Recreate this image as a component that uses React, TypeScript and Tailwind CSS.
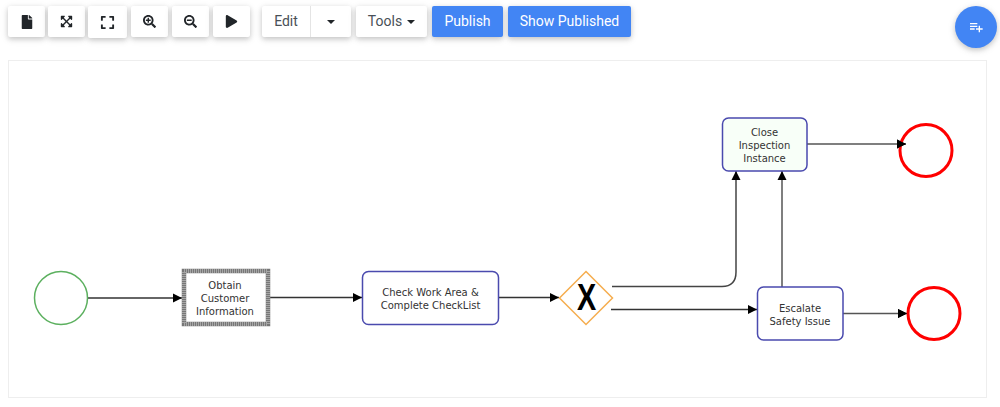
import { FaExpand, FaExpandArrowsAlt, FaFile, FaPlay, FaSearchMinus, FaSearchPlus } from "react-icons/fa";
import { MdPlaylistAdd } from "react-icons/md";

const shadow = "shadow-[0_2px_5px_0_rgba(0,0,0,0.16),0_2px_8px_0_rgba(0,0,0,0.1)]";

function IconButton({ children, className }: { children: React.ReactNode; className: string }) {
  return (
    <button className={`flex h-[31px] items-center justify-center rounded-[2px] bg-white text-[#212529] ${shadow} ${className}`}>
      {children}
    </button>
  );
}

function Caret() {
  return <span className="inline-block border-x-[4px] border-t-[4px] border-x-transparent border-t-[#212529]" />;
}

function TaskText({ lines, className }: { lines: string[]; className: string }) {
  return (
    <div className={`absolute flex flex-col items-center justify-center text-center font-['DejaVu_Sans',sans-serif] text-[10px] leading-[13px] text-[#333] ${className}`}>
      {lines.map((line) => (
        <span key={line} className="whitespace-nowrap">
          {line}
        </span>
      ))}
    </div>
  );
}

function Diagram() {
  return (
    <svg className="absolute top-0 left-0" width="978" height="336" viewBox="9 61 978 336">
      <defs>
        <marker id="arrow" markerUnits="userSpaceOnUse" markerWidth="10" markerHeight="10" refX="9" refY="5" orient="auto">
          <path d="M0 0.5 L9 5 L0 9.5 Z" fill="#000" />
        </marker>
      </defs>
      <g fill="none" stroke="#333" strokeWidth="1.5">
        <path d="M87 298 H182" markerEnd="url(#arrow)" />
        <path d="M270 297.5 H362" markerEnd="url(#arrow)" />
        <path d="M499 297.5 H559" markerEnd="url(#arrow)" />
        <path d="M612 286.5 H722 Q736 286.5 736 272 V171" stroke="#444" markerEnd="url(#arrow)" />
        <path d="M611 309.5 H757" markerEnd="url(#arrow)" />
        <path d="M782 287 V171" stroke="#555" markerEnd="url(#arrow)" />
        <path d="M807 144 H906" stroke="#555" markerEnd="url(#arrow)" />
        <path d="M843 313.5 H907" stroke="#555" markerEnd="url(#arrow)" />
      </g>
      <circle cx="61" cy="298" r="26.5" fill="#fff" stroke="#5cb05f" strokeWidth="1.5" />
      <rect x="184" y="271" width="84" height="53" fill="#fff" stroke="#777" strokeWidth="4.5" />
      <rect x="184" y="271" width="84" height="53" fill="none" stroke="#fff" strokeWidth="4.5" strokeDasharray="1 1" opacity="0.35" />
      <rect x="362.5" y="271.5" width="136" height="53" rx="6" fill="#fff" stroke="#4a4aae" strokeWidth="1.5" />
      <path d="M586 271.5 L612.5 298 L586 324.5 L559.5 298 Z" fill="#fff" stroke="#f6ad4e" strokeWidth="1.5" />
      <rect x="722.5" y="118" width="84.5" height="53" rx="6" fill="#f8fff8" stroke="#4a4aae" strokeWidth="1.5" />
      <rect x="757.5" y="287" width="85.5" height="53" rx="6" fill="#fff" stroke="#4a4aae" strokeWidth="1.5" />
      <circle cx="926" cy="150.5" r="26" fill="#fff" fillOpacity="0" stroke="#f00" strokeWidth="3" />
      <circle cx="934" cy="313.5" r="26" fill="#fff" fillOpacity="0" stroke="#f00" strokeWidth="3" />
      <path d="M897 139.5 L906 144 L897 148.5 Z" fill="#000" />
      <path d="M898 309 L907 313.5 L898 318 Z" fill="#000" />
    </svg>
  );
}

export default function App() {
  return (
    <div className="relative h-[407px] w-[1000px] overflow-hidden bg-white font-['Roboto',sans-serif]">
      <div className="flex items-start pt-[6px] pl-[8px] text-[14px] text-[#495057]">
        <IconButton className="w-[37px] text-[14px]"><FaFile /></IconButton>
        <IconButton className="ml-[3px] w-[37px] text-[13px]"><FaExpandArrowsAlt /></IconButton>
        <IconButton className="ml-[3px] h-[32px] w-[39px] text-[15px]"><FaExpand /></IconButton>
        <IconButton className="ml-[4px] w-[37px] text-[13px]"><FaSearchPlus /></IconButton>
        <IconButton className="ml-[4px] w-[37px] text-[13px]"><FaSearchMinus /></IconButton>
        <IconButton className="ml-[4px] w-[37px] text-[13px]"><FaPlay /></IconButton>
        <div className={`ml-[12px] flex h-[31px] w-[89px] rounded-[2px] bg-white ${shadow}`}>
          <button className="w-[49px] border-r border-[#e4e4e4] text-center">Edit</button>
          <button className="flex flex-1 items-center justify-center"><Caret /></button>
        </div>
        <button className={`ml-[5px] flex h-[31px] w-[71px] items-center justify-center gap-[5px] rounded-[2px] bg-white ${shadow}`}>
          Tools <Caret />
        </button>
        <button className={`ml-[5px] h-[31px] w-[71px] rounded-[2px] bg-[#4285f4] text-white ${shadow}`}>Publish</button>
        <button className={`ml-[5px] h-[31px] w-[123px] rounded-[2px] bg-[#4285f4] text-white ${shadow}`}>Show Published</button>
      </div>
      <div className={`absolute top-[6px] left-[955px] flex h-[42px] w-[42px] items-center justify-center rounded-full bg-[#4285f4] text-[16px] text-white ${shadow}`}>
        <MdPlaylistAdd />
      </div>
      <div className="relative mt-[22px] ml-[8px] h-[338px] w-[979px] border border-[#eeeeee]">
        <Diagram />
        <TaskText lines={["Obtain", "Customer", "Information"]} className="top-[209px] left-[172px] h-[57px] w-[88px]" />
        <TaskText lines={["Check Work Area &", "Complete CheckList"]} className="top-[211px] left-[353px] h-[54px] w-[137px]" />
        <TaskText lines={["Close", "Inspection", "Instance"]} className="top-[58px] left-[713px] h-[53px] w-[85px]" />
        <TaskText lines={["Escalate", "Safety Issue"]} className="top-[227px] left-[748px] h-[53px] w-[86px]" />
        <span className="absolute top-[222px] left-[566px] w-[20px] scale-x-[0.8] text-center font-['Liberation_Sans',sans-serif] text-[36px] leading-[30px] font-bold text-black">
          X
        </span>
      </div>
    </div>
  );
}
